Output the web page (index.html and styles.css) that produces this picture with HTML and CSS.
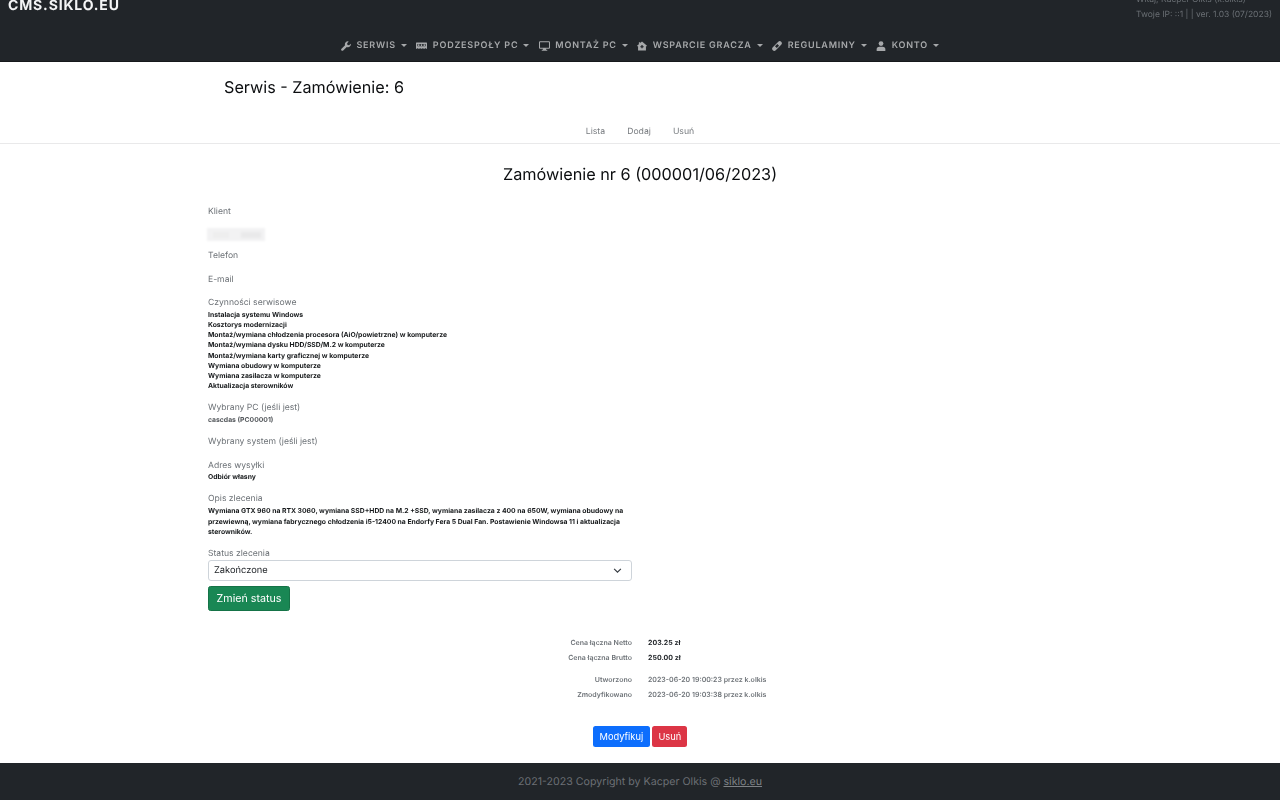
FILE: index.html
```html
<!DOCTYPE html>
<html lang="pl">
<head>
<meta charset="utf-8">
<title>Serwis - Zamówienie: 6</title>
<link rel="stylesheet" href="styles.css">
</head>
<body>
<header class="topbar">
  <div class="topbar-row">
    <a class="brand">CMS.SIKLO.EU</a>
    <div class="session">
      <div>Witaj, Kacper Olkis (k.olkis)</div>
      <div class="session-ip">Twoje IP: ::1 | | ver. 1.03 (07/2023)</div>
    </div>
  </div>
  <nav class="mainnav">
    <a class="mainnav-item"><svg class="ico" viewBox="0 0 16 16"><path d="M15.6 4.2 13 6.8l-2.6-.6-.6-2.6L12.400.9A4.500 4.500 0 0 0 6.500 6.700L.8 12.400a1.900 1.900 0 0 0 2.700 2.700l5.700-5.700a4.500 4.500 0 0 0 6.400-5.200Z"/></svg>SERWIS<i class="caret"></i></a>
    <a class="mainnav-item"><svg class="ico ico-wide" viewBox="0 0 16 12"><path fill-rule="evenodd" d="M.5 1h15a.5.500 0 0 1 .5.500V10H14V9h-1v1h-2.500V9h-1v1h-3V9h-1v1H3V9H2v1H0V1.500A.5.500 0 0 1 .5 1ZM2 3v3.500h12V3H2Z"/><path d="M3 3.500h2v2.500H3zM7 3.500h2v2.500H7zM11 3.500h2v2.500h-2z"/></svg>PODZESPOŁY PC<i class="caret"></i></a>
    <a class="mainnav-item"><svg class="ico ico-wide" viewBox="0 0 16 14"><path fill-rule="evenodd" d="M1.500 0h13A1.500 1.500 0 0 1 16 1.500v8a1.500 1.500 0 0 1-1.500 1.500H10l.4 1.500H12V14H4v-1.500h1.600L6 11H1.500A1.500 1.500 0 0 1 0 9.500v-8A1.500 1.500 0 0 1 1.500 0Zm0 1.500v8h13v-8h-13Z"/></svg>MONTAŻ PC<i class="caret"></i></a>
    <a class="mainnav-item"><svg class="ico" viewBox="0 0 16 16"><path fill-rule="evenodd" d="M8 .8 16 7.500l-1 1.100-.7-.6V15H1.700V8l-.7.600-1-1.100 3-2.500V2h2v1.300L8 .8ZM7 6.500v1.700H5.300v1.600H7v1.700h2V9.800h1.700V8.200H9V6.500H7Z"/></svg>WSPARCIE GRACZA<i class="caret"></i></a>
    <a class="mainnav-item"><svg class="ico" viewBox="0 0 16 16"><path d="M10 1.200a3.300 3.300 0 0 1 4.700 4.700L6 14.700A3.300 3.300 0 0 1 1.300 10L10 1.200Zm-1.500 3.500L4.800 8.400l2.800 2.800 3.700-3.700-2.800-2.800Z"/></svg>REGULAMINY<i class="caret"></i></a>
    <a class="mainnav-item"><svg class="ico" viewBox="0 0 16 16"><circle cx="8" cy="4" r="3.800"/><path d="M5.500 9h5a4.500 4.500 0 0 1 4.500 4.500V15a1 1 0 0 1-1 1H2a1 1 0 0 1-1-1v-1.500A4.500 4.500 0 0 1 5.500 9Z"/></svg>KONTO<i class="caret"></i></a>
  </nav>
</header>

<main>
  <section class="pagehead">
    <h1 class="pagehead-title">Serwis - Zamówienie: 6</h1>
    <nav class="subnav">
      <a>Lista</a><a>Dodaj</a><a>Usuń</a>
    </nav>
  </section>

  <h2 class="order-title">Zamówienie nr 6 (000001/06/2023)</h2>

  <div class="order">
    <div class="field field-client">
      <div class="label">Klient</div>
      <div class="client-mask"><span></span><span></span><span></span></div>
    </div>
    <div class="field field-phone"><div class="label">Telefon</div></div>
    <div class="field field-mail"><div class="label">E-mail</div></div>
    <div class="field field-tasks">
      <div class="label">Czynności serwisowe</div>
      <div class="value">Instalacja systemu Windows</div>
      <div class="value">Kosztorys modernizacji</div>
      <div class="value">Montaż/wymiana chłodzenia procesora (AiO/powietrzne) w komputerze</div>
      <div class="value">Montaż/wymiana dysku HDD/SSD/M.2 w komputerze</div>
      <div class="value">Montaż/wymiana karty graficznej w komputerze</div>
      <div class="value">Wymiana obudowy w komputerze</div>
      <div class="value">Wymiana zasilacza w komputerze</div>
      <div class="value">Aktualizacja sterowników</div>
    </div>
    <div class="field field-pc">
      <div class="label">Wybrany PC (jeśli jest)</div>
      <div class="value value-muted">cascdas (PC00001)</div>
    </div>
    <div class="field field-system"><div class="label">Wybrany system (jeśli jest)</div></div>
    <div class="field field-address">
      <div class="label">Adres wysyłki</div>
      <div class="value">Odbiór własny</div>
    </div>
    <div class="field field-desc">
      <div class="label">Opis zlecenia</div>
      <div class="value">Wymiana GTX 960 na RTX 3060, wymiana SSD+HDD na M.2 +SSD, wymiana zasilacza z 400 na 650W, wymiana obudowy na przewiewną, wymiana fabrycznego chłodzenia i5-12400 na Endorfy Fera 5 Dual Fan. Postawienie Windowsa 11 i aktualizacja sterowników.</div>
    </div>
    <div class="field field-status">
      <div class="label">Status zlecenia</div>
      <div class="select">Zakończone<svg class="select-arrow" viewBox="0 0 16 16"><path d="m2 5 6 6 6-6"/></svg></div>
      <button class="btn btn-green btn-status">Zmień status</button>
    </div>
  </div>

  <div class="summary">
    <div class="summary-row"><span class="summary-key">Cena łączna Netto</span><span class="summary-val">203.25 zł</span></div>
    <div class="summary-row"><span class="summary-key">Cena łączna Brutto</span><span class="summary-val">250.00 zł</span></div>
    <div class="summary-row summary-gap"><span class="summary-key">Utworzono</span><span class="summary-val summary-muted">2023-06-20 19:00:23 przez k.olkis</span></div>
    <div class="summary-row"><span class="summary-key">Zmodyfikowano</span><span class="summary-val summary-muted">2023-06-20 19:03:38 przez k.olkis</span></div>
  </div>

  <div class="actions">
    <button class="btn btn-blue">Modyfikuj</button>
    <button class="btn btn-red">Usuń</button>
  </div>
</main>

<footer class="footer">2021-2023 Copyright by Kacper Olkis @&nbsp;<a class="footer-link">siklo.eu</a></footer>
</body>
</html>
```

FILE: styles.css
```css
* { box-sizing: border-box; }
html, body { margin: 0; padding: 0; }
body {
  width: 1280px;
  height: 800px;
  overflow: hidden;
  background: #fff;
  color: #212529;
  font-family: Inter, "Liberation Sans", sans-serif;
  font-size: 10px;
  text-rendering: geometricPrecision;
  display: flex;
  flex-direction: column;
}
.topbar {
  height: 62px;
  flex: none;
  background: #212529;
  border-bottom: 1px solid #16191c;
}
.topbar-row {
  height: 36px;
  display: flex;
  justify-content: space-between;
  overflow: hidden;
  filter: blur(.3px);
}
.brand {
  color: #f4f5f6;
  font-weight: 700;
  font-size: 14px;
  line-height: 17px;
  letter-spacing: .85px;
  margin: -3px 0 0 8px;
}
.session {
  color: #6a6f74;
  font-size: 8.5px;
  line-height: 15px;
  width: 144px;
  margin-top: -7px;
  white-space: nowrap;
}
.mainnav {
  display: flex;
  justify-content: center;
  gap: 9.5px;
  height: 18px;
  padding-top: 1px;
  filter: blur(.3px);
}
.mainnav-item {
  display: flex;
  align-items: center;
  color: #a6a8aa;
  font-size: 9px;
  font-weight: 600;
  letter-spacing: .78px;
  line-height: 18px;
}
.ico {
  width: 10px;
  height: 10px;
  fill: #a6a8aa;
  margin-right: 5.5px;
}
.ico-wide { width: 11px; }
.caret {
  width: 0;
  height: 0;
  margin-left: 5px;
  border-top: 3px solid #a6a8aa;
  border-left: 3px solid transparent;
  border-right: 3px solid transparent;
}
main { flex: 1; min-height: 0; filter: blur(.3px); }
.pagehead {
  height: 82px;
  border-bottom: 1px solid #e9e9ea;
  display: flex;
  flex-direction: column;
}
.pagehead-title {
  margin: 16px 0 0 224px;
  font-size: 16.2px;
  line-height: 19px;
  font-weight: 400;
  color: #0c0e10;
}
.subnav {
  margin-top: 30px;
  display: flex;
  justify-content: center;
  gap: 22px;
  font-size: 8.7px;
  line-height: 11px;
  color: #777b7f;
}
.order-title {
  margin: 20.5px 0 0;
  text-align: center;
  font-size: 16.25px;
  line-height: 19px;
  font-weight: 400;
  color: #0c0e10;
}
.order {
  width: 424px;
  margin: 0 0 0 208px;
}
.label {
  color: #6d7277;
  font-size: 8.6px;
  line-height: 11px;
}
.value {
  color: #16191b;
  font-size: 6.82px;
  line-height: 10.14px;
  font-weight: 700;
}
.value-muted { color: #54585c; }
.field-client { margin-top: 23.5px; }
.client-mask {
  display: flex;
  gap: 3px;
  width: 58px;
  height: 13px;
  margin: 10px 0 0 -1px;
  background: #f2f2f3;
  filter: blur(1.2px);
}
.client-mask span { background: #e9e9ea; height: 6px; margin-top: 4px; }
.client-mask span:nth-child(1) { width: 16px; margin-left: 6px; opacity: .5; }
.client-mask span:nth-child(2) { width: 6px; opacity: 0; }
.client-mask span:nth-child(3) { width: 20px; }
.field-phone { margin-top: 10px; }
.field-mail { margin-top: 12.5px; }
.field-tasks { margin-top: 12.5px; }
.field-tasks .label { margin-bottom: 1px; }
.field-pc { margin-top: 12px; }
.field-pc .label { margin-bottom: 1px; }
.field-system { margin-top: 12px; }
.field-address { margin-top: 13px; }
.field-desc { margin-top: 12px; }
.field-desc .label { margin-bottom: 1px; }
.field-desc .value { line-height: 10.5px; }
.field-status { margin-top: 11px; }
.select {
  height: 21px;
  padding: 0 5px;
  display: flex;
  align-items: center;
  justify-content: space-between;
  border: 1px solid #ced4da;
  border-radius: 3px;
  color: #212529;
  font-size: 9.3px;
}
.select-arrow {
  width: 9px;
  height: 9px;
  margin-right: 4px;
  fill: none;
  stroke: #343a40;
  stroke-width: 2;
}
.btn {
  display: inline-block;
  border: 1px solid transparent;
  border-radius: 2.5px;
  color: #fff;
  font: 400 9.3px/14px Inter, "Liberation Sans", sans-serif;
  padding: 2px 6px;
  height: 21px;
}
.btn-status {
  display: block;
  margin-top: 5px;
  height: 25px;
  width: 82px;
  padding: 1px 0 0;
  font-size: 10.7px;
}
.btn-green { background: #198754; border-color: #157347; }
.btn-blue { background: #0d6efd; }
.btn-red { background: #dc3545; padding: 2px 5.25px; }
.summary { margin-top: 24px; }
.summary-row {
  display: flex;
  gap: 16px;
  height: 15px;
  align-items: center;
  font-size: 7px;
  font-weight: 600;
}
.summary-gap { margin-top: 7px; }
.summary-key {
  width: 632px;
  text-align: right;
  color: #6e7378;
}
.summary-val { color: #212529; font-weight: 700; }
.summary-muted { color: #6e7378; font-weight: 600; }
.actions {
  margin-top: 24.5px;
  display: flex;
  justify-content: center;
  gap: 2px;
}
.footer {
  height: 37px;
  flex: none;
  background: #212529;
  color: #6c7075;
  display: flex;
  align-items: center;
  justify-content: center;
  font-size: 10.65px;
}
.footer-link { text-decoration: underline; color: #7e8286; }
```
